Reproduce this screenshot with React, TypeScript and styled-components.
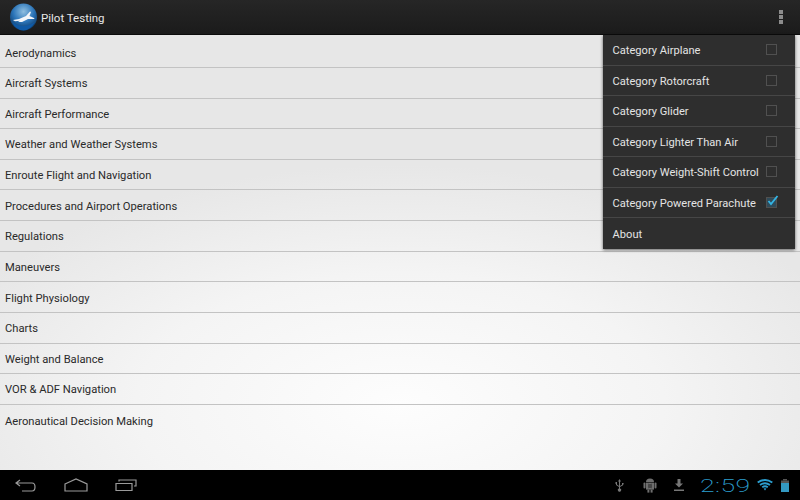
import React from "react";
import styled, { createGlobalStyle } from "styled-components";

const GlobalStyle = createGlobalStyle`
  html, body {
    margin: 0;
    padding: 0;
    background: #000;
  }

  body {
    font-family: Roboto, "Liberation Sans", sans-serif;
  }
`;

const Screen = styled.div`
  position: relative;
  width: 800px;
  height: 500px;
  display: flex;
  flex-direction: column;
  overflow: hidden;
`;

const ActionBar = styled.header`
  height: 35px;
  flex: none;
  box-sizing: border-box;
  display: flex;
  align-items: center;
  padding: 0 16px 0 10px;
  background: linear-gradient(#262626, #1b1b1b);
  border-bottom: 1px solid #0c0c0c;
`;

const Title = styled.h1`
  margin: 1px 0 0 4px;
  font-size: 11.5px;
  font-weight: 400;
  color: #e8e8e8;
  flex: 1;
`;

const Overflow = styled.div`
  display: flex;
  flex-direction: column;
  gap: 1px;
  margin-right: 1px;

  span {
    width: 4px;
    height: 4px;
    background: #8c8c8c;
  }
`;

const List = styled.main`
  flex: 1;
  padding-top: 2.3px;
  background: radial-gradient(ellipse 480px 240px at 50% 85%, #fdfdfd 0%, #f4f4f4 55%, #e7e7e7 100%);
  background-color: #e7e7e7;
`;

const Row = styled.div<{ $last?: boolean }>`
  height: 30.64px;
  box-sizing: border-box;
  padding: 2px 0 0 5px;
  display: flex;
  align-items: center;
  font-size: 11.2px;
  color: #2a2a2a;
  border-bottom: ${(p) => (p.$last ? "none" : "1px solid #c3c3c3")};
`;

const Menu = styled.div`
  position: absolute;
  top: 35px;
  left: 603px;
  width: 192px;
  background: #2e2e2e;
  box-shadow: 0 1px 3px rgba(0, 0, 0, 0.6);
`;

const MenuRow = styled.div<{ $last?: boolean }>`
  height: 30.5px;
  box-sizing: border-box;
  padding: 2px 18px 0 9.6px;
  display: flex;
  align-items: center;
  justify-content: space-between;
  font-size: 11.1px;
  color: #e4e4e4;
  white-space: nowrap;
  border-bottom: ${(p) => (p.$last ? "none" : "1px solid #464646")};
`;

const Check = styled.span<{ $on?: boolean }>`
  position: relative;
  width: 9px;
  height: 9px;
  margin-top: -2px;
  flex: none;
  border: 1px solid #505050;
  background: ${(p) => (p.$on ? "#2f4a58" : "transparent")};

  svg {
    position: absolute;
    left: 0;
    top: -3px;
  }
`;

const NavBar = styled.footer`
  height: 30px;
  flex: none;
  background: #000;
  display: flex;
  align-items: center;
  padding: 0 11px 0 15px;
`;

const NavButtons = styled.div`
  display: flex;
  align-items: center;
  gap: 27.5px;
  flex: 1;
`;

const Tray = styled.div`
  display: flex;
  align-items: center;
`;

const Clock = styled.span`
  display: inline-block;
  width: 50px;
  margin: 0 7px 0 16px;
  font-family: Roboto, sans-serif;
  font-weight: 200;
  font-size: 19px;
  line-height: 19px;
  color: #2c9fd0;
  letter-spacing: 0.3px;
  transform: scaleX(1.4);
  transform-origin: left center;
`;

const topics = [
  "Aerodynamics",
  "Aircraft Systems",
  "Aircraft Performance",
  "Weather and Weather Systems",
  "Enroute Flight and Navigation",
  "Procedures and Airport Operations",
  "Regulations",
  "Maneuvers",
  "Flight Physiology",
  "Charts",
  "Weight and Balance",
  "VOR & ADF Navigation",
  "Aeronautical Decision Making",
];

const categories = [
  { label: "Category Airplane" },
  { label: "Category Rotorcraft" },
  { label: "Category Glider" },
  { label: "Category Lighter Than Air" },
  { label: "Category Weight-Shift Control" },
  { label: "Category Powered Parachute", on: true },
];

const Logo = () => (
  <svg width="27" height="28" viewBox="0 0 27 28">
    <defs>
      <radialGradient id="globe" cx="50%" cy="30%" r="70%">
        <stop offset="0%" stopColor="#8fbfe0" />
        <stop offset="55%" stopColor="#2a74b8" />
        <stop offset="100%" stopColor="#0c3560" />
      </radialGradient>
    </defs>
    <circle cx="13.5" cy="14" r="13.5" fill="url(#globe)" />
    <path d="M2 19 Q13 27 25 19 Q20 27.5 13.5 27.5 Q6 27.5 2 19Z" fill="#0f5aa6" />
    <path
      d="M3 17 L9 16 L16 13 L20 8.5 L21 9 L19.5 13 L24 15 L24.5 16 L18 16 L12 19 L8 19 L10 17.8 L5 18.2Z"
      fill="#f2f6fa"
    />
  </svg>
);

const BackIcon = () => (
  <svg width="21" height="13" viewBox="0 0 21 13" fill="none" stroke="#9a9a9a" strokeWidth="1.2">
    <path d="M5 1 L1 4 L5 7 M1 4 H17 Q20 4 20 8 Q20 12 17 12 H7" />
  </svg>
);

const HomeIcon = () => (
  <svg width="24" height="14" viewBox="0 0 24 14" fill="none" stroke="#9a9a9a" strokeWidth="1.2">
    <path d="M1 6 L12 1 L23 6 V13 H1Z" />
  </svg>
);

const RecentIcon = () => (
  <svg width="22" height="12" viewBox="0 0 22 12" fill="none" stroke="#9a9a9a" strokeWidth="1.2">
    <path d="M1 4.5 H17 V11.5 H1Z M4 2.5 V1 H21 V7 H19" />
  </svg>
);

const UsbIcon = () => (
  <svg width="9" height="13" viewBox="0 0 9 13" fill="#777" style={{ marginRight: 19 }}>
    <path d="M4.5 0 L6 2.5 H5 V9.5 A1.6 1.6 0 1 1 4 9.5 V2.5 H3Z" />
    <path d="M0.5 3 H2 V5.5 L4 7 V8 L1 6 V5 H0.5Z M7 4 H8.6 V5.6 H8 V6.2 L5 8 V7 L7.4 5.6 H7Z" />
  </svg>
);

const AndroidIcon = () => (
  <svg width="14" height="15" viewBox="0 0 14 15" fill="#6e6e6e" style={{ marginRight: 17 }}>
    <path d="M3 4 A4 3.6 0 0 1 11 4Z" />
    <rect x="3" y="4.6" width="8" height="7" />
    <rect x="0.5" y="4.6" width="2" height="6" rx="1" />
    <rect x="11.5" y="4.6" width="2" height="6" rx="1" />
    <rect x="4.4" y="11.6" width="2" height="3" />
    <rect x="7.6" y="11.6" width="2" height="3" />
    <path d="M5 6 L9 8 L5 10 M9 6 L5 8 L9 10" stroke="#333" strokeWidth="0.8" fill="none" />
  </svg>
);

const DownloadIcon = () => (
  <svg width="10" height="12" viewBox="0 0 10 12" fill="#777">
    <path d="M3.5 0 H6.5 V4.5 H9 L5 8.5 L1 4.5 H3.5Z" />
    <rect x="0" y="10.5" width="10" height="1.5" />
  </svg>
);

const WifiIcon = () => (
  <svg width="16" height="12" viewBox="0 0 16 12" fill="none" stroke="#2c9fd0" strokeWidth="1.9" style={{ marginRight: 8 }}>
    <path d="M0.7 3.6 Q8 -1.6 15.3 3.6" />
    <path d="M3 6 Q8 2.4 13 6" />
    <path d="M5.2 8.2 Q8 6.3 10.8 8.2" />
    <path d="M6.6 9.6 L8 11.4 L9.4 9.6 Q8 8.7 6.6 9.6Z" fill="#2c9fd0" stroke="none" />
  </svg>
);

const BatteryIcon = () => (
  <svg width="8" height="13" viewBox="0 0 8 13">
    <rect x="2" y="0" width="4" height="1.5" fill="#555" />
    <rect x="0" y="1.5" width="8" height="3" fill="#555" />
    <rect x="0" y="4" width="8" height="9" fill="#3399c2" />
  </svg>
);

const App: React.FC = () => {
  return (
    <Screen>
      <GlobalStyle />
      <ActionBar>
        <Logo />
        <Title>Pilot Testing</Title>
        <Overflow>
          <span />
          <span />
          <span />
        </Overflow>
      </ActionBar>
      <List>
        {topics.map((topic, i) => (
          <Row key={topic} $last={i === topics.length - 1}>
            {topic}
          </Row>
        ))}
      </List>
      <Menu>
        {categories.map((item) => (
          <MenuRow key={item.label}>
            {item.label}
            <Check $on={item.on}>
              {item.on && (
                <svg width="12" height="11" viewBox="0 0 12 11" fill="none" stroke="#33b5e5" strokeWidth="1.8">
                  <path d="M1.5 6 L4 9 L10.5 1" />
                </svg>
              )}
            </Check>
          </MenuRow>
        ))}
        <MenuRow $last>About</MenuRow>
      </Menu>
      <NavBar>
        <NavButtons>
          <BackIcon />
          <HomeIcon />
          <RecentIcon />
        </NavButtons>
        <Tray>
          <UsbIcon />
          <AndroidIcon />
          <DownloadIcon />
          <Clock>2:59</Clock>
          <WifiIcon />
          <BatteryIcon />
        </Tray>
      </NavBar>
    </Screen>
  );
};

export default App;
